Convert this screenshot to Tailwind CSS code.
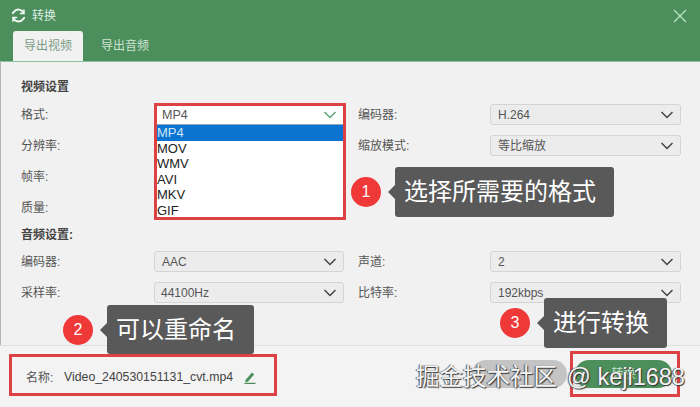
<!DOCTYPE html>
<html lang="zh-CN">
<head>
    <meta charset="UTF-8">
    <title>转换</title>
    <script src="https://cdn.jsdelivr.net/npm/@tailwindcss/browser@4"></script>
</head>
<body class="w-[700px] h-[407px] overflow-hidden bg-[#f1f1f1] font-['Liberation_Sans','Noto_Sans_CJK_SC',sans-serif] text-[12px] text-[#555]">
<div class="relative w-[700px] h-[407px] flex flex-col">

    <!-- title bar + tabs -->
    <div class="h-[62px] bg-[#4c8f5c] border-b border-[#8fbf9c] flex flex-col shrink-0">
        <div class="h-[32px] flex items-center justify-between pl-[11px] pr-[13px]">
            <div class="flex items-center gap-[6px] text-[#dfeee3]">
                <svg width="15" height="15" viewBox="0 0 16 16" fill="none" stroke="#f4faf5" stroke-width="2" stroke-linecap="round">
                    <path d="M13.5 5.5A6 6 0 0 0 3 4.2L2 5.5"/>
                    <path d="M2.5 10.5A6 6 0 0 0 13 11.8l1-1.3"/>
                    <path d="M13.8 2v3.8H10M2.2 14v-3.8H6" stroke-width="1.6"/>
                </svg>
                <span>转换</span>
            </div>
            <svg width="14" height="14" viewBox="0 0 14 14" stroke="#bfe8ca" stroke-width="1.1" fill="none"><path d="M1 1l12 12M13 1L1 13"/></svg>
        </div>
        <div class="flex pl-[13px] h-[30px]">
            <div class="w-[70px] h-[30px] bg-[#f1f1f1] rounded-t-[3px] flex items-center justify-center text-[#7a9c85]">导出视频</div>
            <div class="w-[84px] flex items-center justify-center text-[#cfe3d4]">导出音频</div>
        </div>
    </div>

    <!-- settings -->
    <div class="h-[283px] shrink-0 border-l border-[#b5b5b5] pl-[20px] pt-[15px]">
        <h2 class="font-bold text-[#444] h-[20px] leading-[20px]">视频设置</h2>
        <div class="grid grid-cols-[133px_190px_146px_191px] auto-rows-[31px] mt-[2px]">
            <span class="self-center">格式:</span>
            <div class="h-[21px]"></div>
            <span class="self-center pl-[14px]">编码器:</span>
            <div class="h-[21px] self-center bg-[#ececec] border border-[#d4d4d4] rounded-[3px] flex items-center justify-between pl-[7px] pr-[6px]">
                <span>H.264</span>
                <svg width="14" height="8" viewBox="0 0 14 8" fill="none" stroke="#444" stroke-width="1.5"><path d="M1.5 1l5.5 5.5L12.5 1"/></svg>
            </div>
            <span class="self-center">分辨率:</span>
            <div></div>
            <span class="self-center pl-[14px]">缩放模式:</span>
            <div class="h-[21px] self-center bg-[#ececec] border border-[#d4d4d4] rounded-[3px] flex items-center justify-between pl-[7px] pr-[6px]">
                <span>等比缩放</span>
                <svg width="14" height="8" viewBox="0 0 14 8" fill="none" stroke="#444" stroke-width="1.5"><path d="M1.5 1l5.5 5.5L12.5 1"/></svg>
            </div>
            <span class="self-center">帧率:</span><div></div><div></div><div></div>
            <span class="self-center">质量:</span><div></div><div></div><div></div>
        </div>
        <h2 class="font-bold text-[#444] h-[20px] leading-[20px] mt-[2px]">音频设置:</h2>
        <div class="grid grid-cols-[133px_190px_146px_191px] auto-rows-[31px] mt-[1px]">
            <span class="self-center">编码器:</span>
            <div class="h-[21px] self-center bg-[#ececec] border border-[#d4d4d4] rounded-[3px] flex items-center justify-between pl-[7px] pr-[6px]">
                <span>AAC</span>
                <svg width="14" height="8" viewBox="0 0 14 8" fill="none" stroke="#444" stroke-width="1.5"><path d="M1.5 1l5.5 5.5L12.5 1"/></svg>
            </div>
            <span class="self-center pl-[14px]">声道:</span>
            <div class="h-[21px] self-center bg-[#ececec] border border-[#d4d4d4] rounded-[3px] flex items-center justify-between pl-[7px] pr-[6px]">
                <span>2</span>
                <svg width="14" height="8" viewBox="0 0 14 8" fill="none" stroke="#444" stroke-width="1.5"><path d="M1.5 1l5.5 5.5L12.5 1"/></svg>
            </div>
            <span class="self-center">采样率:</span>
            <div class="h-[21px] self-center bg-[#ececec] border border-[#d4d4d4] rounded-[3px] flex items-center justify-between pl-[6px] pr-[6px]">
                <span>44100Hz</span>
                <svg width="14" height="8" viewBox="0 0 14 8" fill="none" stroke="#444" stroke-width="1.5"><path d="M1.5 1l5.5 5.5L12.5 1"/></svg>
            </div>
            <span class="self-center pl-[14px]">比特率:</span>
            <div class="h-[21px] self-center bg-[#ececec] border border-[#d4d4d4] rounded-[3px] flex items-center justify-between pl-[7px] pr-[6px]">
                <span>192kbps</span>
                <svg width="14" height="8" viewBox="0 0 14 8" fill="none" stroke="#444" stroke-width="1.5"><path d="M1.5 1l5.5 5.5L12.5 1"/></svg>
            </div>
        </div>
    </div>

    <!-- footer -->
    <div class="flex-1 border-t border-[#dedede] bg-[#f3f3f3] flex items-center justify-between pl-[26px] pr-[28px]">
        <div class="flex items-center text-[#555] mt-[2px]">
            <span class="w-[38px]">名称:</span>
            <span class="text-[#444] text-[12.3px]">Video_240530151131_cvt.mp4</span>
            <svg class="ml-[11px] mb-[1px]" width="12" height="13" viewBox="0 0 12 13" fill="#4c8f5c"><path d="M1.5 9L8 1.5l2.2 2-6.4 7.2-2.6.3zM0.5 11.8h11V13H0.5z"/></svg>
        </div>
        <div class="flex gap-[8px] mt-[-5px]">
            <div class="w-[95px] h-[28px] rounded-full bg-[#c4c4c4]"></div>
            <div class="w-[97px] h-[28px] rounded-full bg-[#4c8f5c] flex items-center justify-center text-[#cfe3d4]">转换</div>
        </div>
    </div>

    <!-- open dropdown, outlined in red -->
    <div class="absolute left-[154px] top-[103px] w-[192px] h-[117px] border-[3px] border-[#dc4143] bg-white">
        <div class="h-[19px] flex items-center justify-between pl-[5px] pr-[6px] border-b border-[#8aa6bd]">
            <span class="text-[#555] text-[12.5px]">MP4</span>
            <svg width="14" height="8" viewBox="0 0 14 8" fill="none" stroke="#5aa67a" stroke-width="1.5"><path d="M1.5 1l5.5 5.5L12.5 1"/></svg>
        </div>
        <ul class="text-[13px] leading-[15.5px] text-[#222]">
            <li class="bg-[#0a74d0] text-[#cfe4f7]">MP4</li>
            <li>MOV</li>
            <li>WMV</li>
            <li>AVI</li>
            <li>MKV</li>
            <li>GIF</li>
        </ul>
    </div>

    <!-- callouts -->
    <div class="absolute left-[351px] top-[177px] w-[30px] h-[30px] rounded-full bg-[#ef3838] text-white text-[16px] flex items-center justify-center">1</div>
    <div class="absolute left-[395px] top-[167px] w-[219px] h-[50px] rounded-[3px] bg-[#595959] text-white text-[24px] flex items-center pl-[9px]">选择所需要的格式</div>
    <div class="absolute left-[388px] top-[185px] border-y-[7px] border-y-transparent border-r-[7px] border-r-[#595959]"></div>

    <div class="absolute left-[63px] top-[315px] w-[30px] h-[30px] rounded-full bg-[#ef3838] text-white text-[16px] flex items-center justify-center">2</div>
    <div class="absolute left-[107px] top-[305px] w-[147px] h-[49px] rounded-[3px] bg-[#595959] text-white text-[24px] flex items-center pl-[9px]">可以重命名</div>
    <div class="absolute left-[100px] top-[323px] border-y-[7px] border-y-transparent border-r-[7px] border-r-[#595959]"></div>

    <div class="absolute left-[500px] top-[308px] w-[30px] h-[30px] rounded-full bg-[#ef3838] text-white text-[16px] flex items-center justify-center">3</div>
    <div class="absolute left-[544px] top-[298px] w-[123px] h-[50px] rounded-[3px] bg-[#595959] text-white text-[24px] flex items-center pl-[9px]">进行转换</div>
    <div class="absolute left-[537px] top-[316px] border-y-[7px] border-y-transparent border-r-[7px] border-r-[#595959]"></div>

    <!-- red highlight boxes -->
    <div class="absolute left-[9px] top-[354px] w-[268px] h-[42px] border-[3px] border-[#dc4143]"></div>
    <div class="absolute left-[570px] top-[351px] w-[110px] h-[46px] border-[3px] border-[#dc4143]"></div>

    <!-- watermark -->
    <div class="absolute left-[416px] top-[363px] text-[23.5px] leading-[28px] whitespace-nowrap text-[#f4f4f4] [text-shadow:1px_1px_1px_#333,-1px_0_1px_#555]">掘金技术社区<span class="ml-[10px]">@ keji1688</span></div>
</div>
</body>
</html>
